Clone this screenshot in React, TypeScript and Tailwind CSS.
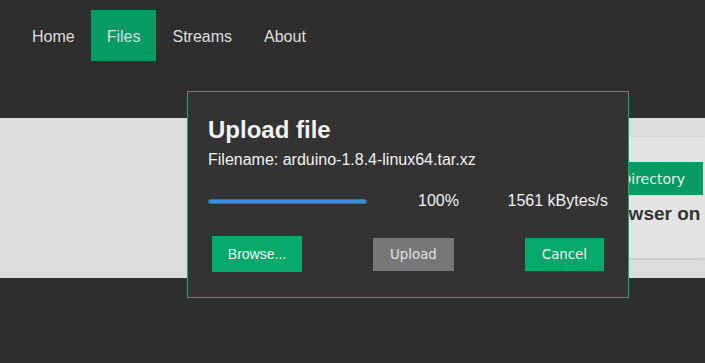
import React from "react"

const NAV = ["Home", "Files", "Streams", "About"]

export default function App() {
  return (
    <div className="relative h-[363px] w-[705px] overflow-hidden bg-[#2e2e2e] font-['Liberation_Sans',Arial,sans-serif]">
      {/* Top nav */}
      <nav className="flex pl-4 pt-[10px]">
        {NAV.map((n) => (
          <a
            key={n}
            className={
              "flex h-[51px] items-center px-4 pt-[2px] text-[16px] text-[#dedede] " +
              (n === "Files" ? "bg-[#069a64]" : "")
            }
          >
            {n}
          </a>
        ))}
      </nav>

      {/* Page body behind the dialog */}
      <div className="mt-[57px] h-[160px] bg-[#dcdcdc] pt-[19px]">
        <div className="ml-auto h-[121px] w-[420px] bg-[#e4e4e4] shadow-[0_1px_3px_rgba(0,0,0,0.12)]">
          <div className="flex justify-end pr-[2px] pt-[25px]">
            <button className="h-[33px] bg-[#079c63] px-[18px] pt-[1px] font-['DejaVu_Sans',sans-serif] text-[14px] text-[#e6f3ec]">
              New Directory
            </button>
          </div>
          <h2 className="mt-[6px] whitespace-nowrap pl-[275px] text-[19px] font-bold leading-[26px] text-[#333]">
            File browser on ...
          </h2>
        </div>
      </div>

      {/* Upload dialog */}
      <div className="absolute left-[187px] top-[91px] h-[207px] w-[442px] border border-[#1ea674] bg-[#333333] px-[20px] pt-[25px] text-[#f2f2f2]">
        <h2 className="text-[24px] font-bold leading-[26px]">Upload file</h2>
        <p className="mt-[7px] text-[16px] leading-[20px]">Filename: arduino-1.8.4-linux64.tar.xz</p>

        <div className="mt-[21px] flex h-[20px] items-center text-[16px] leading-[20px]">
          <div className="h-[5px] w-[159px] rounded-full border border-[#2f72c4] bg-[#3a8ce6]" />
          <span className="ml-[51px]">100%</span>
          <span className="ml-auto">1561 kBytes/s</span>
        </div>

        <div className="mt-[25px] flex h-[36px] items-center justify-between px-[4px]">
          <label className="flex h-[36px] w-[90px] items-center justify-center bg-[#06a96c] text-[14px] text-[#f4f4f4]">
            Browse...
          </label>
          <button className="h-[33px] bg-[#777777] px-[17px] pt-[2px] font-['DejaVu_Sans',sans-serif] text-[13.33px] text-[#e2e2e2]">
            Upload
          </button>
          <button className="h-[33px] bg-[#06a96c] px-[17px] pt-[2px] font-['DejaVu_Sans',sans-serif] text-[13.33px] text-[#f2f2f2]">
            Cancel
          </button>
        </div>
      </div>
    </div>
  )
}
